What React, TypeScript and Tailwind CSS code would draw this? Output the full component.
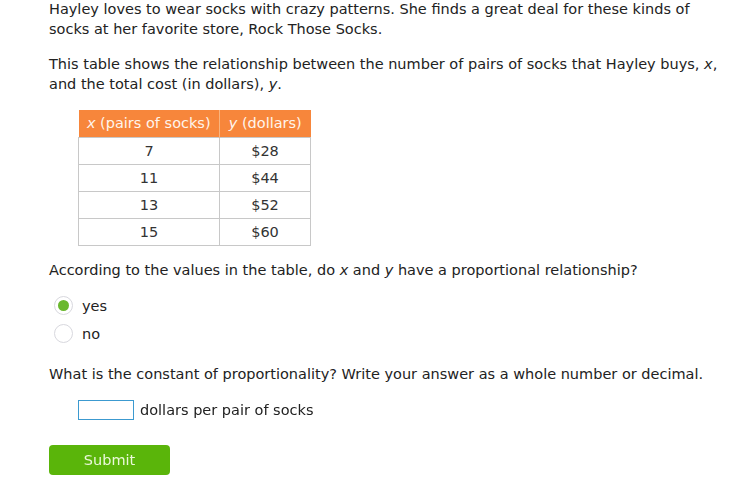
import React, { useState } from 'react';

const rows = [
  { x: '7', y: '$28' },
  { x: '11', y: '$44' },
  { x: '13', y: '$52' },
  { x: '15', y: '$60' },
];

const App: React.FC = () => {
  const [answer, setAnswer] = useState<'yes' | 'no'>('yes');
  const [value, setValue] = useState('');

  return (
    <div className="min-h-screen bg-white pl-[49px] pt-0 text-[14.5px] leading-[20px] text-[#222]" style={{ fontFamily: '"DejaVu Sans", Verdana, sans-serif' }}>
      <p className="-mt-px">
        <span className="block whitespace-nowrap">Hayley loves to wear socks with crazy patterns. She finds a great deal for these kinds of</span>
        <span className="block whitespace-nowrap">socks at her favorite store, Rock Those Socks.</span>
      </p>
      <p className="mt-[15px]">
        <span className="block whitespace-nowrap">This table shows the relationship between the number of pairs of socks that Hayley buys, <i>x</i>,</span>
        <span className="block whitespace-nowrap">and the total cost (in dollars), <i>y</i>.</span>
      </p>

      <table className="ml-[29px] mt-[16px] border-collapse text-[14.5px]">
        <thead>
          <tr className="bg-[#f7863b] text-[#fff5ec]">
            <th className="h-[27px] w-[141px] border-r border-[#f9b47e] px-0 font-normal"><i>x</i> (pairs of socks)</th>
            <th className="h-[27px] w-[91px] px-0 font-normal"><i>y</i> (dollars)</th>
          </tr>
        </thead>
        <tbody className="text-[#333]">
          {rows.map((r) => (
            <tr key={r.x}>
              <td className="h-[27px] border border-[#c8c8c8] text-center">{r.x}</td>
              <td className="h-[27px] border border-[#c8c8c8] text-center">{r.y}</td>
            </tr>
          ))}
        </tbody>
      </table>

      <p className="mt-[14px] whitespace-nowrap">
        According to the values in the table, do <i>x</i> and <i>y</i> have a proportional relationship?
      </p>

      <div className="mt-[16px] flex flex-col gap-[8px] pl-[5px]">
        {(['yes', 'no'] as const).map((opt) => (
          <label key={opt} className="flex h-[20px] cursor-pointer items-center gap-[9px]" onClick={() => setAnswer(opt)}>
            <span className="flex h-[19px] w-[19px] items-center justify-center rounded-full border border-[#d8d8de] bg-white">
              {answer === opt && <span className="h-[11px] w-[11px] rounded-full bg-[#6ab82e]" />}
            </span>
            <span>{opt}</span>
          </label>
        ))}
      </div>

      <p className="mt-[20px] whitespace-nowrap">
        What is the constant of proportionality? Write your answer as a whole number or decimal.
      </p>

      <div className="mt-[16px] flex items-center gap-[6px] pl-[29px]">
        <input
          value={value}
          onChange={(e) => setValue(e.target.value)}
          autoFocus
          className="h-[20px] w-[56px] border border-[#3c9ad0] bg-white px-[2px] text-[14.5px] outline-none"
        />
        <span>dollars per pair of socks</span>
      </div>

      <button className="mt-[25px] h-[30px] w-[121px] rounded-[4px] bg-[#5ab50a] text-[14.5px] text-[#eaf8d9]">
        Submit
      </button>
    </div>
  );
};

export default App;
